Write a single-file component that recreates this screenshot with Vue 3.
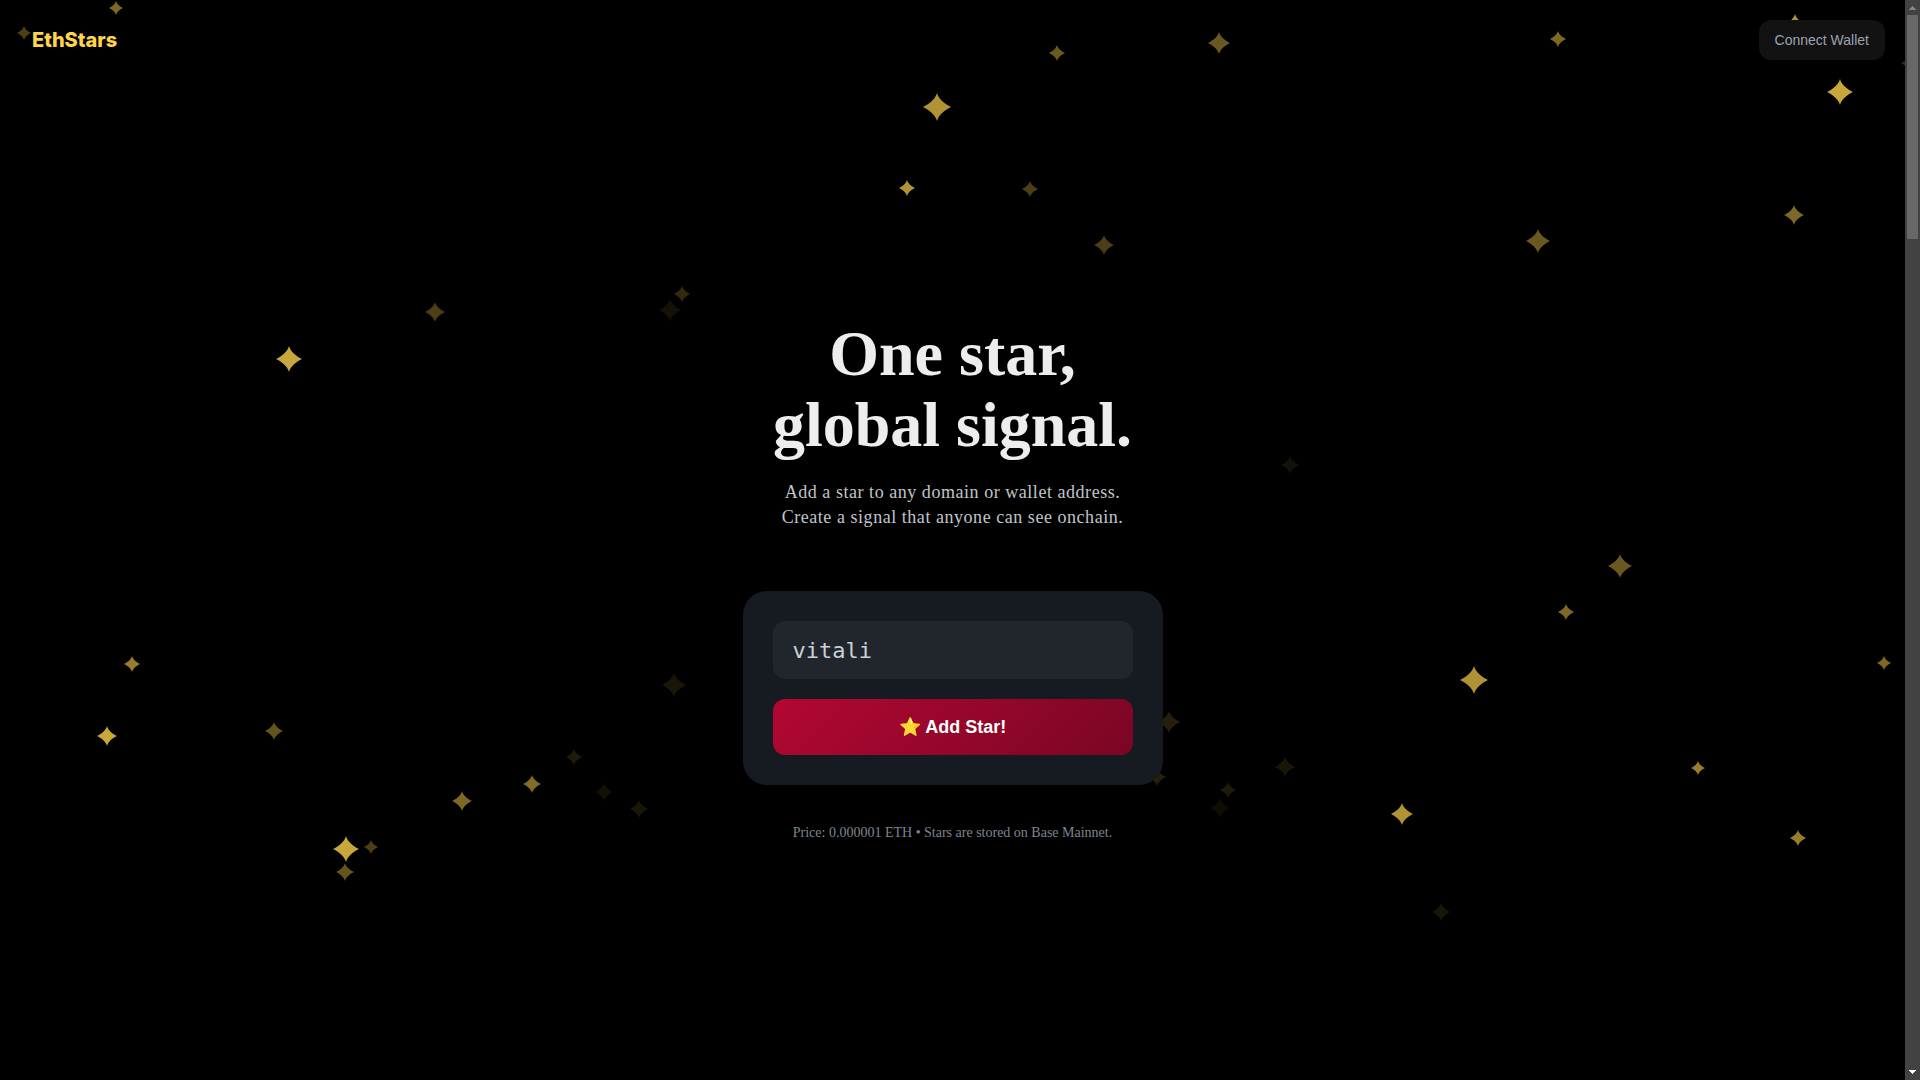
<script setup>
import { ref } from 'vue'

const FIELD_WIDTH = 1905
const FIELD_HEIGHT = 1080

// x, y, size, opacity
const stars = [
  [116, 8, 14, 0.5], [24, 33, 14, 0.3], [435, 312, 20, 0.3], [289, 359, 26, 0.8],
  [1219, 43, 22, 0.42], [1057, 53, 16, 0.42], [937, 107, 28, 0.7], [907, 188, 16, 0.7],
  [1030, 189, 16, 0.3], [1104, 245, 20, 0.3], [682, 294, 16, 0.2], [670, 310, 22, 0.08],
  [1558, 39, 16, 0.5], [1795, 25, 22, 0.7], [1909, 63, 16, 0.2], [1840, 92, 26, 0.8],
  [1794, 215, 20, 0.5], [1538, 241, 24, 0.42], [1169, 722, 22, 0.15], [1157, 777, 18, 0.15],
  [132, 664, 16, 0.6], [107, 736, 20, 0.8], [274, 731, 18, 0.4], [674, 685, 24, 0.1],
  [574, 757, 16, 0.12], [532, 784, 18, 0.52], [462, 801, 20, 0.5], [604, 792, 18, 0.07],
  [639, 809, 18, 0.1], [346, 849, 26, 0.8], [371, 847, 14, 0.3], [345, 872, 18, 0.4],
  [1290, 465, 18, 0.08], [1620, 566, 24, 0.42], [1566, 612, 16, 0.5], [1474, 680, 28, 0.7],
  [1884, 663, 14, 0.5], [1285, 767, 20, 0.1], [1228, 790, 16, 0.12], [1220, 808, 20, 0.06],
  [1402, 814, 22, 0.7], [1698, 768, 14, 0.6], [1798, 838, 16, 0.6], [1441, 912, 18, 0.1]
]

const starStyle = ([x, y, size, opacity]) => ({
  left: `${(x / FIELD_WIDTH) * 100}%`,
  top: `${(y / FIELD_HEIGHT) * 100}%`,
  width: `${size}px`,
  height: `${size}px`,
  opacity
})

const target = ref('vitali')
</script>

<template>
  <div class="window">
    <div class="page">
      <div class="sky" aria-hidden="true">
        <svg v-for="(star, i) in stars" :key="i" class="star" :style="starStyle(star)" viewBox="0 0 24 24">
          <path d="M12 0C13.5 5.5 19 9.5 24 12C19 14.5 13.5 18.5 12 24C10.5 18.5 5 14.5 0 12C5 9.5 10.5 5.5 12 0Z" />
        </svg>
      </div>

      <header class="header">
        <a class="logo" href="#">EthStars</a>
        <button class="connect" type="button">Connect Wallet</button>
      </header>

      <main class="hero">
        <h1 class="title">One star,<br />global signal.</h1>
        <p class="subtitle">
          Add a star to any domain or wallet address.<br />Create a signal that anyone can see onchain.
        </p>
        <form class="card" @submit.prevent>
          <input v-model="target" class="field" type="text" aria-label="Domain or wallet address" spellcheck="false" />
          <button class="submit" type="submit">⭐ Add Star!</button>
        </form>
        <p class="note">Price: 0.000001 ETH • Stars are stored on Base Mainnet.</p>
      </main>
    </div>

    <div class="scrollbar" aria-hidden="true">
      <svg class="arrow dim" viewBox="0 0 15 15"><path d="M7 6h1v1h1v1h1v1h1v1H4V9h1V8h1V7h1z" /></svg>
      <div class="thumb"></div>
      <svg class="arrow" viewBox="0 0 15 15"><path d="M4 5h7v1h-1v1H9v1H8v1H7V8H6V7H5V6H4z" /></svg>
    </div>
  </div>
</template>

<style>
body {
  margin: 0;
  background: #000;
}
</style>

<style scoped>
.window {
  display: flex;
  min-height: 100vh;
  background: #000;
}

.page {
  position: relative;
  display: flex;
  flex: 1;
  flex-direction: column;
  min-width: 0;
  overflow: hidden;
  font-family: "Liberation Serif", serif;
}

.sky {
  position: absolute;
  inset: 0;
}

.star {
  position: absolute;
  transform: translate(-50%, -50%);
  fill: #fad24b;
}

.header {
  position: relative;
  display: flex;
  align-items: center;
  justify-content: space-between;
  height: 80px;
  padding: 0 20px 0 32px;
}

.logo {
  color: #ffd54a;
  font: 800 20px/24px Inter, sans-serif;
  text-decoration: none;
}

.connect {
  height: 40px;
  padding: 0 16px;
  border: 0;
  border-radius: 12px;
  background: #121212;
  color: #9ca3af;
  font: 14px/20px "Liberation Sans", sans-serif;
}

.hero {
  position: relative;
  display: flex;
  flex: 1;
  flex-direction: column;
  align-items: center;
  justify-content: center;
  text-align: center;
}

.title {
  margin: 0 0 20px;
  color: #ededed;
  font-size: 64px;
  line-height: 71px;
}

.subtitle {
  margin: 0 0 61px;
  color: #c0c4cc;
  font-size: 18px;
  line-height: 25px;
  letter-spacing: 0.03em;
}

.card {
  display: flex;
  flex-direction: column;
  gap: 20px;
  box-sizing: border-box;
  width: 420px;
  max-width: 100%;
  padding: 30px;
  border-radius: 24px;
  background: #161b22;
}

.field {
  box-sizing: border-box;
  width: 100%;
  height: 58px;
  padding: 0 20px;
  border: 0;
  border-radius: 12px;
  outline: 0;
  background: #21262d;
  color: #c9d1d9;
  font: 22px/28px "DejaVu Sans Mono", monospace;
}

.submit {
  height: 56px;
  border: 0;
  border-radius: 12px;
  background: linear-gradient(135deg, #b30733, #7a0623);
  color: #fff;
  font: 700 18px/24px "Liberation Sans", sans-serif;
}

.note {
  margin: 39px 0 0;
  color: #7d8590;
  font-size: 14px;
  line-height: 18px;
}

.scrollbar {
  display: flex;
  flex-direction: column;
  width: 15px;
  background: #424242;
}

.arrow {
  width: 15px;
  height: 15px;
  fill: #fff;
  shape-rendering: crispEdges;
}

.arrow.dim {
  fill: #868686;
}

.thumb {
  height: 224px;
  margin: 0 2px auto;
  background: #686868;
}
</style>
